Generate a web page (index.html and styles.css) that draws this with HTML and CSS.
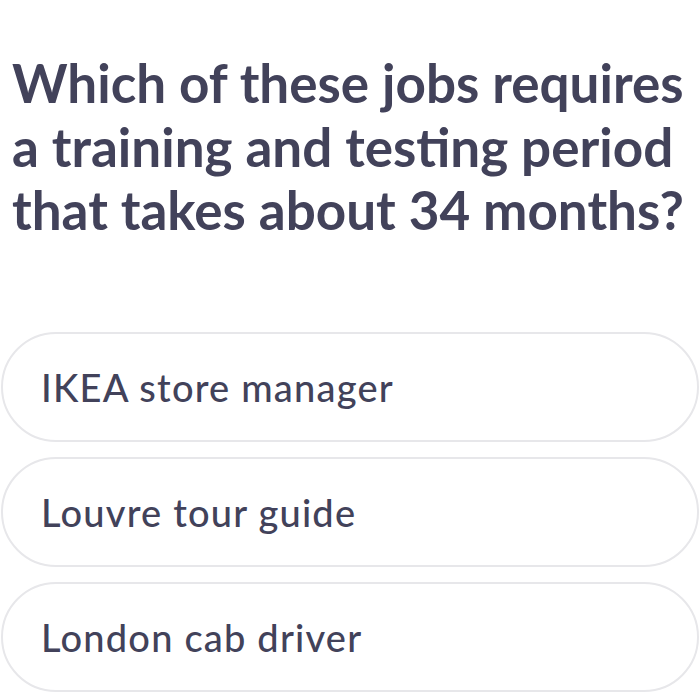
FILE: index.html
```html
<!DOCTYPE html>
<html lang="en">
<head>
<meta charset="utf-8">
<link rel="stylesheet" href="styles.css">
</head>
<body>
<main class="quiz">
  <h1 class="question">Which of these jobs requires a training and testing period that takes about 34 months?</h1>
  <div class="options">
    <div class="option">IKEA store manager</div>
    <div class="option">Louvre tour guide</div>
    <div class="option">London cab driver</div>
  </div>
</main>
</body>
</html>
```
FILE: styles.css
```css
html, body {
  margin: 0;
  padding: 0;
  background: #ffffff;
}
body {
  font-family: Lato, "Noto Sans", sans-serif;
  color: #42425a;
}
.quiz {
  width: 700px;
  height: 700px;
  overflow: hidden;
  box-sizing: border-box;
  padding: 51px 1px 0 1px;
}
.question {
  margin: 0 0 0 11px;
  font-size: 53px;
  line-height: 63.5px;
  font-weight: 700;
  letter-spacing: 0;
}
.options {
  margin-top: 90px;
  display: flex;
  flex-direction: column;
  gap: 15px;
}
.option {
  height: 110px;
  box-sizing: border-box;
  border: 2.5px solid #e7e7ea;
  border-radius: 56px;
  display: flex;
  align-items: center;
  padding-left: 38px;
  font-size: 38px;
  font-weight: 500;
  letter-spacing: 1.2px;
}
```
